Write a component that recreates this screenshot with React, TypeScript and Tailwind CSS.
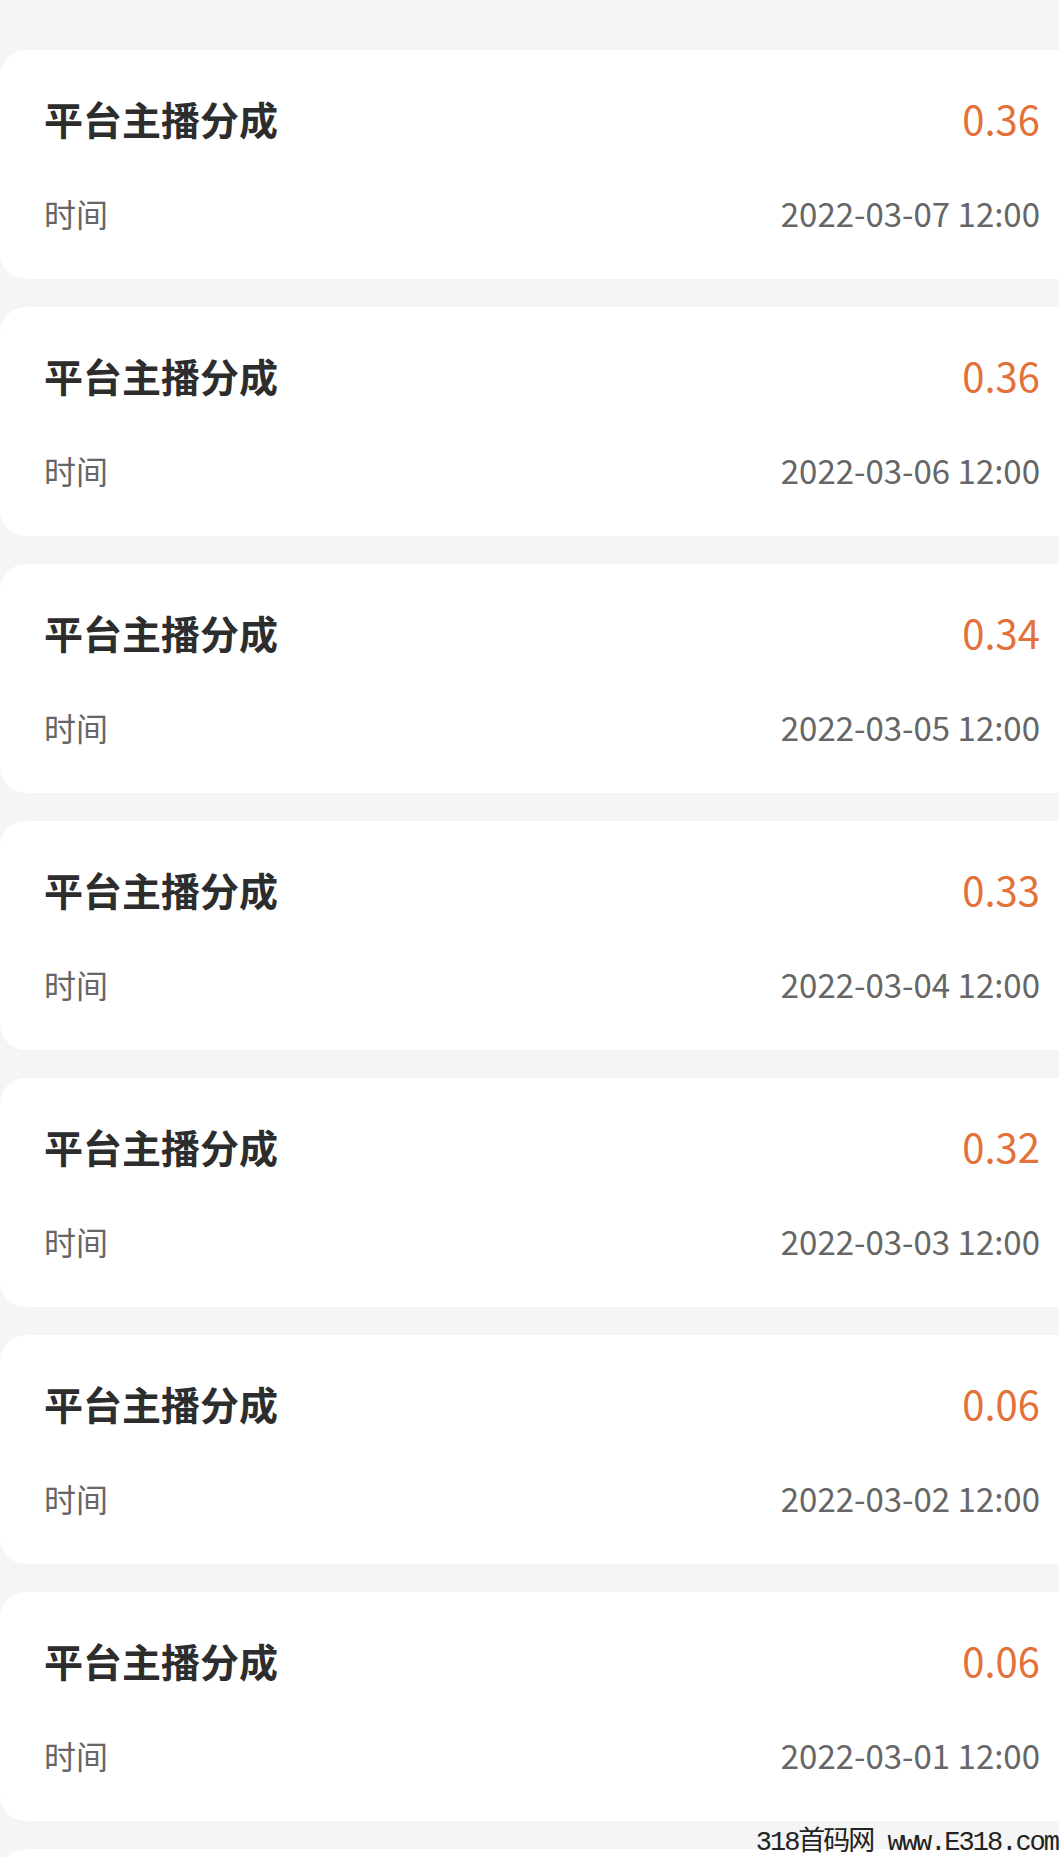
import React from 'react';

// Earnings list – platform anchor revenue share records

type Row = { amount: string; time: string };

const rows: Row[] = [
  { amount: '0.36', time: '2022-03-07 12:00' },
  { amount: '0.36', time: '2022-03-06 12:00' },
  { amount: '0.34', time: '2022-03-05 12:00' },
  { amount: '0.33', time: '2022-03-04 12:00' },
  { amount: '0.32', time: '2022-03-03 12:00' },
  { amount: '0.06', time: '2022-03-02 12:00' },
  { amount: '0.06', time: '2022-03-01 12:00' },
];

const RecordCard: React.FC<{ row: Row }> = ({ row }) => (
  <div className="h-[229px] shrink-0 bg-white rounded-l-[26px] pl-[44px] pr-[19px] pt-[44px] flex flex-col">
    <div className="h-[48px] flex items-center justify-between">
      <span className="text-[39px] leading-[48px] font-bold text-[#2d2d2d]">平台主播分成</span>
      <span className="text-[40px] leading-[48px] text-[#e2713a]">{row.amount}</span>
    </div>
    <div className="mt-[47px] h-[48px] flex items-center justify-between">
      <span className="text-[32px] leading-[48px] text-[#666666]">时间</span>
      <span className="text-[33px] leading-[48px] text-[#666666]">{row.time}</span>
    </div>
  </div>
);

export default function App() {
  return (
    <div
      className="relative h-[1857px] overflow-hidden bg-[#f5f5f5] pt-[50px] flex flex-col gap-[28px]"
      style={{ fontFamily: '"Noto Sans CJK SC", "Noto Sans", sans-serif' }}
    >
      {rows.map((r, i) => (
        <RecordCard key={i} row={r} />
      ))}
      {/* next record peeking at the bottom */}
      <div className="h-[229px] shrink-0 bg-white rounded-l-[26px]" />

      {/* watermark */}
      <div
        className="absolute right-0 bottom-0 pr-[1px] h-[28px] flex items-end text-[27px] leading-[28px] tracking-[-2px] text-[#222222] whitespace-nowrap"
        style={{ fontFamily: '"Liberation Mono", "Noto Sans CJK SC", monospace' }}
      >
        318首码网 www.E318.com
      </div>
    </div>
  );
}
